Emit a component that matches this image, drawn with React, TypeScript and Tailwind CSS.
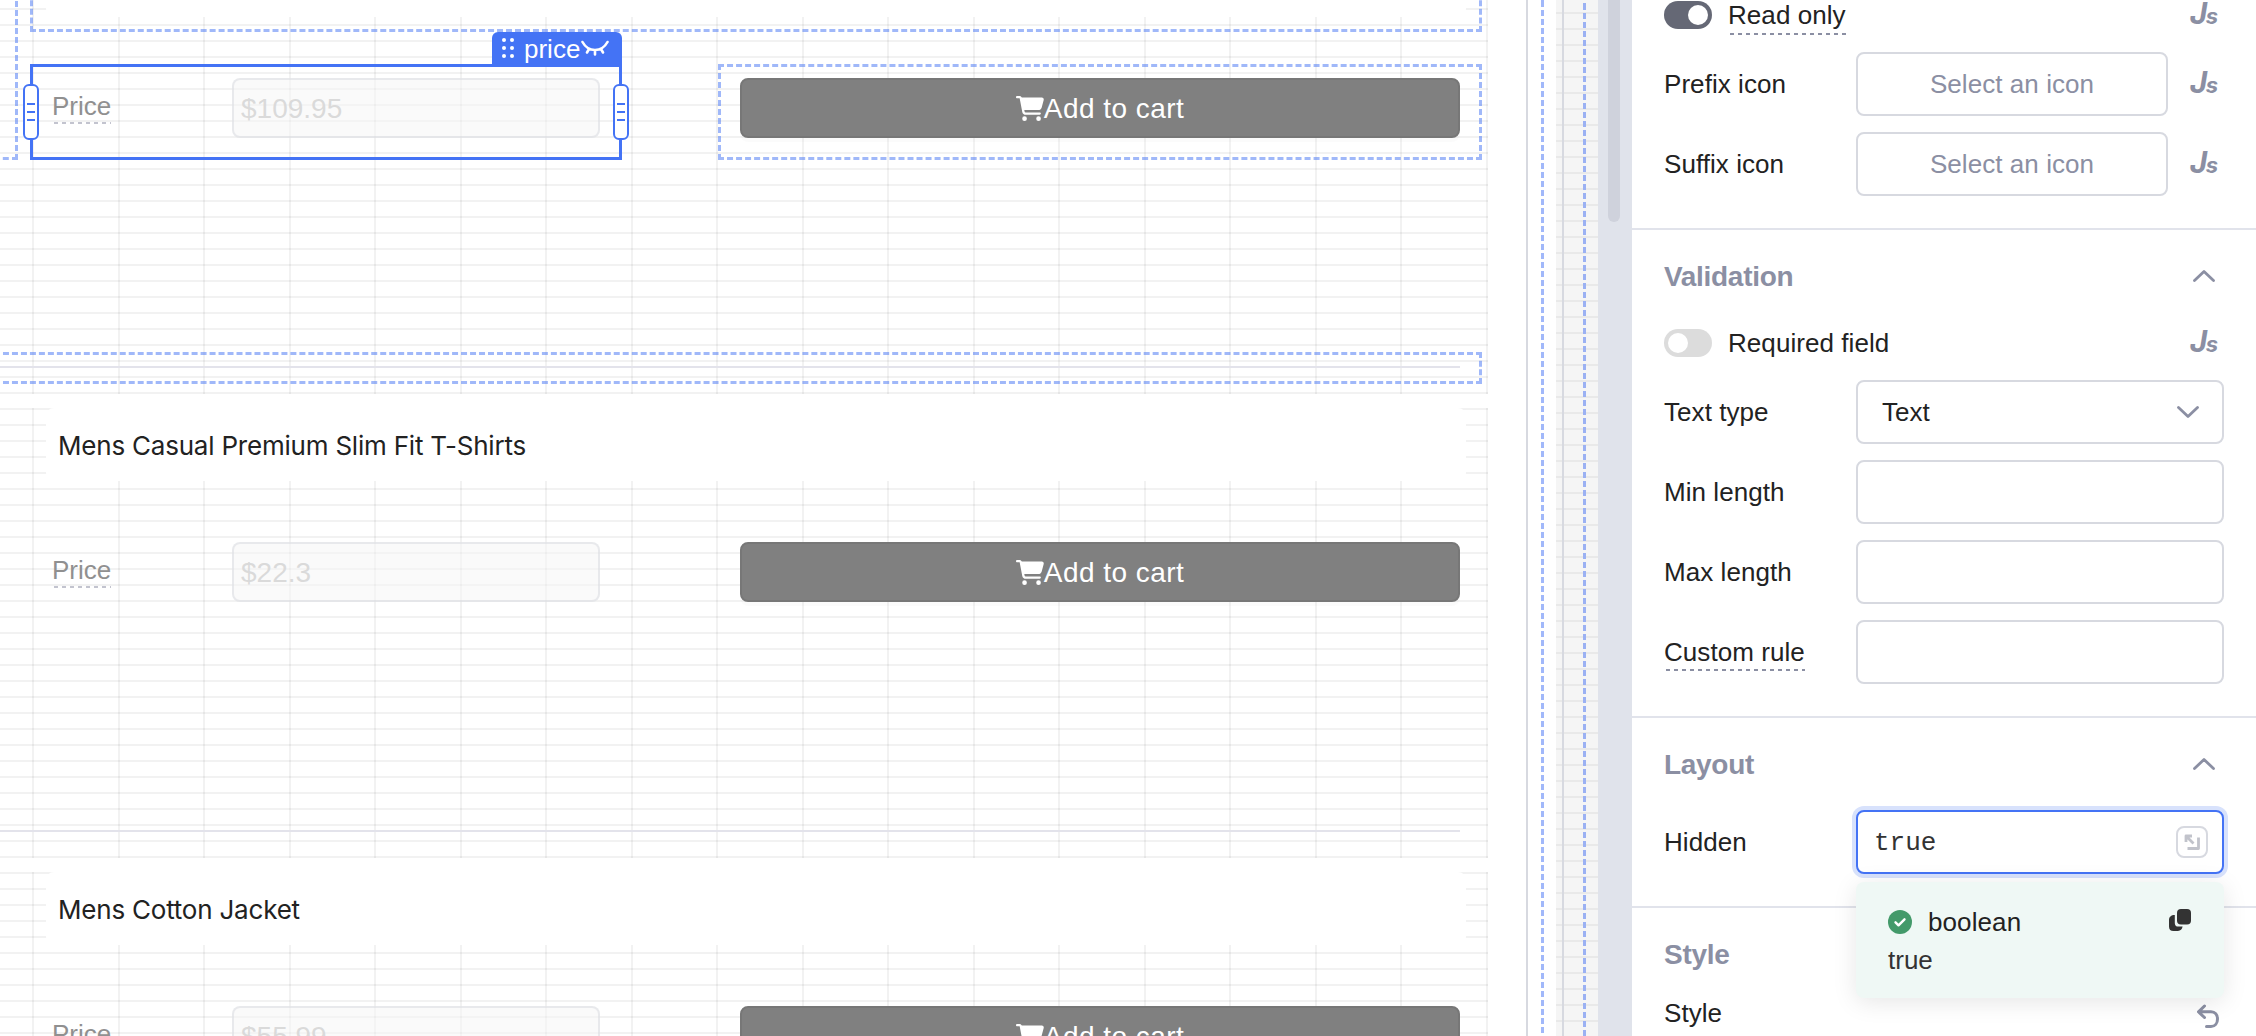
import React from "react";

const COLUMN_COUNT = 18;

function GridColumns() {
  return (
    <div className="pointer-events-none absolute inset-0 flex justify-end overflow-hidden">
      {Array.from({ length: COLUMN_COUNT }, (_, i) => (
        <div key={i} className="w-[85.53px] shrink-0 border-r-2 border-black/5" />
      ))}
    </div>
  );
}

function CartIcon() {
  return (
    <svg className="h-[25px] w-7" viewBox="0 0 576 512" preserveAspectRatio="none" fill="currentColor">
      <path d="M0 24C0 10.700 10.700 0 24 0H69.500c22 0 41.500 12.800 50.600 32h411c26.300 0 45.500 25 38.600 50.400l-41 152.300c-8.500 31.400-37 53.300-69.500 53.300H170.700l5.400 28.500c2.200 11.300 12.100 19.500 23.600 19.500H488c13.300 0 24 10.700 24 24s-10.700 24-24 24H199.700c-34.600 0-64.300-24.600-70.700-58.500L77.400 54.500c-.7-3.800-4-6.500-7.900-6.500H24C10.700 48 0 37.300 0 24zM128 464a48 48 0 1 1 96 0 48 48 0 1 1-96 0zm336-48a48 48 0 1 1 0 96 48 48 0 1 1 0-96z" />
    </svg>
  );
}

function ProductCard({ title, price }: { title: string; price: string }) {
  return (
    <section className="relative h-[450px] shrink-0 bg-[linear-gradient(to_bottom,rgba(0,0,0,0.05)_2px,transparent_2px)] bg-[length:100%_16px]">
      <GridColumns />
      <div className="relative">
        <h2 className="ml-[46px] mr-[22px] flex h-[73px] items-center rounded-lg bg-white pl-3 pt-px font-[Inter,sans-serif] text-[26px] text-[#222] tracking-[-0.21px]">
          {title}
        </h2>
        <div className="mt-[61px] flex h-[60px] items-start pl-[52px] pr-7">
          <div className="w-[180px] shrink-0">
            <span className="relative mt-[12px] inline-block text-[26px] leading-8 text-[#909090]">
              Price
              <span className="absolute -bottom-0.5 left-0.5 right-0 h-0.5 bg-[repeating-linear-gradient(to_right,#c3c4cf_0_4px,transparent_4px_8px)]" />
            </span>
          </div>
          <div className="flex h-[60px] w-[368px] shrink-0 items-center rounded-lg border-2 border-[#d7d9e0]/50 bg-[#f5f5f5]/50 pl-[7px] pt-px text-[28px] text-[#dadada]">
            {price}
          </div>
          <button className="ml-[140px] flex h-[60px] grow items-center justify-center rounded-lg border-2 border-[#777] bg-[#808080] text-[28px] text-white shadow-[0_4px_0_rgba(0,0,0,0.015)]">
            <CartIcon />
            <span className="pt-px tracking-[0.45px]">Add to cart</span>
          </button>
        </div>
        <div className="mr-7 mt-[228px] h-0.5 bg-[#e3e3eb]" />
      </div>
    </section>
  );
}

function ResizeHandle({ side }: { side: "left" | "right" }) {
  return (
    <div
      className={
        (side === "left" ? "-left-[7px]" : "-right-[7px]") +
        " absolute top-5 flex h-14 w-4 flex-col items-center justify-center gap-1.5 rounded-md border-2 border-[#4473f5] bg-white"
      }
    >
      <span className="h-0.5 w-2 bg-[#4473f5]" />
      <span className="h-0.5 w-2 bg-[#4473f5]" />
      <span className="h-0.5 w-2 bg-[#4473f5]" />
    </div>
  );
}

function Selection() {
  return (
    <div className="absolute left-[30px] top-16 h-24 w-[592px]">
      <div className="absolute inset-0 border-[3px] border-[#4473f5]" />
      <div className="absolute -top-8 right-0 flex h-8 w-[130px] items-center rounded-t-md bg-[#4473f5] pl-2.5 text-[26px] leading-8 text-white">
        <svg className="h-5 w-3" viewBox="0 0 12 20" fill="#fff">
          {[2, 10, 18].map((y) => (
            <React.Fragment key={y}>
              <circle cx="2" cy={y} r="2" />
              <circle cx="10" cy={y} r="2" />
            </React.Fragment>
          ))}
        </svg>
        <span className="ml-[10px] w-[57px] pt-0.5">price</span>
        <svg className="h-4 w-7" viewBox="0 0 28 16" fill="none" stroke="#fff" strokeWidth="2.600" strokeLinecap="round">
          <path d="M1.500 2C4.500 7.500 9 10 14 10s9.500-2.500 12.500-8M8 9l-2 3.500M14 10v4.500M20 9l2 3.500" />
        </svg>
      </div>
      <ResizeHandle side="left" />
      <ResizeHandle side="right" />
    </div>
  );
}

function Canvas() {
  return (
    <main className="relative flex w-[1598px] shrink-0 overflow-hidden bg-white">
      <div className="-mt-14 flex w-[1488px] shrink-0 flex-col gap-[14px]">
        <ProductCard title="" price="$109.95" />
        <ProductCard title="Mens Casual Premium Slim Fit T-Shirts" price="$22.3" />
        <ProductCard title="Mens Cotton Jacket" price="$55.99" />
      </div>
      <div className="ml-[38px] w-[30px] shrink-0 border-l-2 border-[#d7d9e0] pl-[13px]">
        <div className="h-full w-[3px] bg-[repeating-linear-gradient(to_bottom,#a1b8fa_0_6px,transparent_6px_9px)] bg-[position:0_1px]" />
      </div>
      <div className="flex grow bg-[#f5f5f5] bg-[linear-gradient(to_bottom,#e9e9e9_2px,transparent_2px)] bg-[length:100%_16px] bg-[position:0_12px] pl-1.5">
        <div className="w-0.5 bg-[#d7d9e0]" />
        <div className="ml-[19px] h-full w-[3px] bg-[repeating-linear-gradient(to_bottom,#9bb1f3_0_6px,transparent_6px_9px)] bg-[position:0_4px]" />
      </div>

      <div className="absolute -left-20 -top-20 h-60 w-[98px] border-[3px] border-dashed border-[#4473f5]/50" />
      <div className="absolute -top-[60px] left-[30px] h-[92px] w-[1452px] border-[3px] border-dashed border-[#4473f5]/50" />
      <div className="absolute left-[718px] top-16 h-24 w-[764px] border-[3px] border-dashed border-[#4473f5]/50" />
      <div className="absolute -left-[6px] top-[352px] h-8 w-[1488px] border-[3px] border-dashed border-[#4473f5]/50" />
      <Selection />
    </main>
  );
}

function JsIcon() {
  return (
    <span className="-mt-px flex w-10 shrink-0 items-baseline justify-center pb-px font-[Inter,sans-serif] text-[30px] font-bold italic leading-8 text-[#8b8fa3]">
      J<span className="-ml-[1.5px] text-[22px]">s</span>
    </span>
  );
}

function Label({ children, dashed }: { children: string; dashed?: boolean }) {
  return (
    <span className="relative text-[26px] leading-8 text-[#222] tracking-[0.06px]">
      {children}
      {dashed && (
        <span className="absolute -bottom-1 left-0.5 right-0 h-0.5 bg-[repeating-linear-gradient(to_right,#8b8fa3_0_4px,transparent_4px_8px)]" />
      )}
    </span>
  );
}

function Toggle({ on }: { on?: boolean }) {
  return (
    <span className={(on ? "justify-end bg-[#656875]" : "justify-start bg-[#dcdcdc]") + " mr-4 flex h-7 w-12 items-center rounded-full px-1"}>
      <span className="size-5 rounded-full bg-white" />
    </span>
  );
}

function Chevron({ down }: { down?: boolean }) {
  return (
    <svg
      className={(down ? "rotate-180" : "") + " h-3 w-[22px]"}
      viewBox="0 0 22 12"
      fill="none"
      stroke="#8b8fa3"
      strokeWidth="2.800"
      strokeLinecap="round"
      strokeLinejoin="round"
    >
      <path d="M1.500 10.500 11 1.500l9.500 9" />
    </svg>
  );
}

function SectionHeader({ title, open }: { title: string; open?: boolean }) {
  return (
    <div className="flex h-10 items-center justify-between pr-[9px] text-[28px] font-bold tracking-[-0.3px] text-[#8b8fa3]">
      <span className="pt-0.5">{title}</span>
      {open && <Chevron />}
    </div>
  );
}

function Field({ label, dashed, children }: { label: string; dashed?: boolean; children: React.ReactNode }) {
  return (
    <div className="flex h-16 items-center">
      <div className="w-48 shrink-0">
        <Label dashed={dashed}>{label}</Label>
      </div>
      {children}
    </div>
  );
}

function Box({ children }: { children?: React.ReactNode }) {
  return <div className="flex h-16 grow items-center rounded-lg border-2 border-[#d7d9e0] text-[26px]">{children}</div>;
}

function IconField({ label }: { label: string }) {
  return (
    <Field label={label}>
      <Box>
        <span className="w-full text-center text-[#8b8fa3] tracking-[0.06px]">Select an icon</span>
      </Box>
      <span className="ml-4">
        <JsIcon />
      </span>
    </Field>
  );
}

function Popup() {
  return (
    <div className="absolute left-0 top-[72px] z-10 h-[116px] w-[368px] rounded-lg bg-[#eff8f5] pl-8 pr-[33px] pt-6 text-[26px] text-[#222] shadow-[0_4px_24px_rgba(0,0,0,0.1)]">
      <div className="flex h-8 items-center">
        <svg className="size-6" viewBox="0 0 24 24" fill="none">
          <circle cx="12" cy="12" r="12" fill="#439a6a" />
          <path d="m7.500 12.300 3 3 6-6" stroke="#fff" strokeWidth="2.400" strokeLinecap="round" strokeLinejoin="round" />
        </svg>
        <span className="ml-4 tracking-[0.1px]">boolean</span>
        <svg className="mb-1 ml-auto h-[22px] w-[22px]" viewBox="0 0 22 22" fill="#333">
          <rect x="8" y="0" width="14" height="15.500" rx="4" />
          <path d="M5.800 6v8c0 2.500 1.200 3.600 3.600 3.600h4.200C13 20.500 11.500 22 9 22H4.500C1.500 22 0 20.500 0 17.500V11c0-3 2-5 5.800-5z" />
        </svg>
      </div>
      <div className="mt-[6px] leading-8 text-[#333]">true</div>
    </div>
  );
}

function Inspector() {
  return (
    <aside className="flex w-[624px] shrink-0 flex-col bg-white">
      <section className="h-[230px] shrink-0 border-b-2 border-[#e1e3eb] px-8">
        <div className="flex h-[30px] items-center">
          <Toggle on />
          <Label dashed>Read only</Label>
          <span className="ml-auto">
            <JsIcon />
          </span>
        </div>
        <div className="mt-[22px] flex flex-col gap-4">
          <IconField label="Prefix icon" />
          <IconField label="Suffix icon" />
        </div>
      </section>

      <section className="h-[488px] shrink-0 border-b-2 border-[#e1e3eb] px-8 pt-[26px]">
        <SectionHeader title="Validation" open />
        <div className="mt-[33px] flex h-7 items-center">
          <Toggle />
          <Label>Required field</Label>
          <span className="ml-auto">
            <JsIcon />
          </span>
        </div>
        <div className="mt-[23px] flex flex-col gap-4">
          <Field label="Text type">
            <Box>
              <span className="ml-6 grow text-[#222]">Text</span>
              <span className="mr-[23px]">
                <Chevron down />
              </span>
            </Box>
          </Field>
          <Field label="Min length">
            <Box />
          </Field>
          <Field label="Max length">
            <Box />
          </Field>
          <Field label="Custom rule" dashed>
            <Box />
          </Field>
        </div>
      </section>

      <section className="h-[190px] shrink-0 border-b-2 border-[#e1e3eb] px-8 pt-[26px]">
        <SectionHeader title="Layout" open />
        <div className="mt-[26px]">
          <Field label="Hidden">
            <div className="relative grow">
              <div className="flex h-16 items-center justify-between rounded-lg border-2 border-[#4473f5] bg-white pl-4 pr-3.5 ring-4 ring-[#d8e2fc]">
                <span className="pt-[3px] font-['Liberation_Mono',monospace] text-[26px] text-[#333]">true</span>
                <span className="flex size-8 items-center justify-center rounded-lg border-2 border-[#d7d9e0]">
                  <svg className="size-4" viewBox="0 0 16 16" fill="none" stroke="#c1c3cb" strokeWidth="2.800">
                    <path d="M2 8V2h6M2 2l7.500 7.500" strokeLinejoin="round" />
                    <path d="M14.500 3.500v11H3.500" strokeLinejoin="round" />
                  </svg>
                </span>
              </div>
              <Popup />
            </div>
          </Field>
        </div>
      </section>

      <section className="px-8 pt-[26px]">
        <SectionHeader title="Style" />
        <div className="mt-[23px] flex h-8 items-center justify-between pr-[5px]">
          <Label>Style</Label>
          <svg className="mt-1.5 h-6 w-[22px]" viewBox="0 0 22 24" fill="none" stroke="#8b8fa3" strokeWidth="3" strokeLinecap="round" strokeLinejoin="round">
            <path d="M7.500 2 1.500 7.800l6 5.700M1.500 7.800H14c4 0 6.500 3 6.500 7.200s-2.500 7.500-6.500 7.500H9.500" />
          </svg>
        </div>
      </section>
    </aside>
  );
}

export default function App() {
  return (
    <div className="flex h-[1036px] w-[2256px] overflow-hidden bg-white font-['Liberation_Sans',Arial,sans-serif]">
      <Canvas />
      <div className="w-[34px] shrink-0 bg-[#e0e3eb] pl-2.5">
        <div className="h-[222px] w-3 rounded-b-full bg-[#cfd2dc]" />
      </div>
      <Inspector />
    </div>
  );
}
